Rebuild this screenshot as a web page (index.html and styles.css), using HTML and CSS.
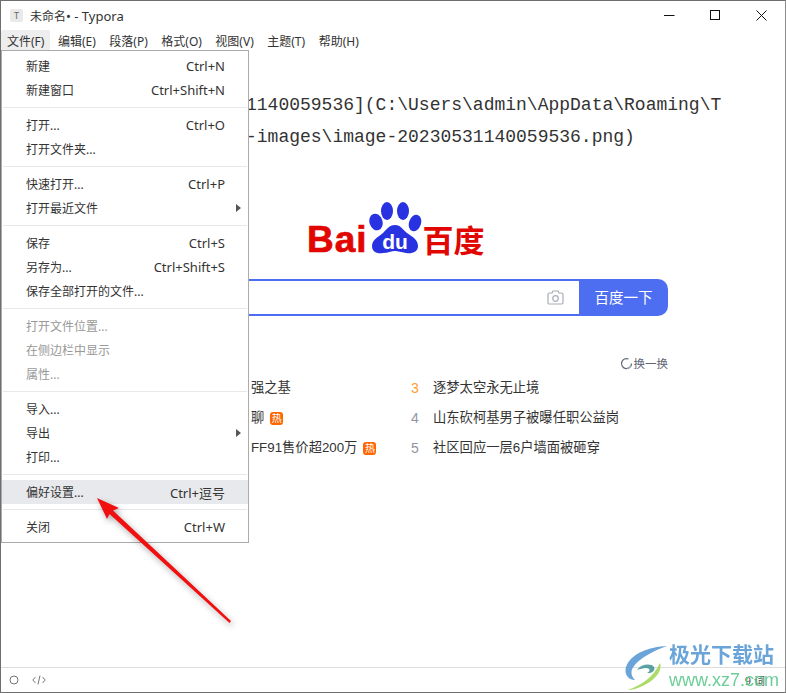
FILE: index.html
```html
<!DOCTYPE html>
<html lang="zh-CN">
<head>
    <meta charset="UTF-8">
    <meta name="viewport" content="width=device-width, initial-scale=1.0">
    <title>未命名• - Typora</title>
    <link rel="stylesheet" href="styles.css">
</head>
<body>
    <div class="window">
        <header class="titlebar">
            <div class="app-icon">T</div>
            <div class="app-title">未命名<span class="title-latin">• - Typora</span></div>
            <div class="win-buttons">
                <svg width="11" height="11" viewBox="0 0 11 11"><path d="M0 5.5H10.5" stroke="#111" fill="none"/></svg>
                <svg width="11" height="11" viewBox="0 0 11 11"><rect x="0.5" y="0.5" width="9" height="9" stroke="#111" fill="none"/></svg>
                <svg width="11" height="11" viewBox="0 0 11 11"><path d="M0.5 0.5L10.5 10.5M10.5 0.5L0.5 10.5" stroke="#111" fill="none"/></svg>
            </div>
        </header>

        <nav class="menubar">
            <a href="#" class="active">文件(F)</a>
            <a href="#">编辑(E)</a>
            <a href="#">段落(P)</a>
            <a href="#">格式(O)</a>
            <a href="#">视图(V)</a>
            <a href="#">主题(T)</a>
            <a href="#">帮助(H)</a>
        </nav>

        <main class="editor">
            <pre class="source">1140059536](C:\Users\admin\AppData\Roaming\T
-images\image-20230531140059536.png)</pre>

            <div class="baidu">
                <div class="baidu-logo">
                    <span class="logo-bai">Bai</span>
                    <svg class="logo-paw" width="55" height="58" viewBox="0 0 55 58">
                        <ellipse cx="8" cy="22" rx="6.5" ry="8.5" transform="rotate(-18 8 22)" fill="#2932e1"/>
                        <ellipse cx="19" cy="11" rx="6" ry="9" fill="#2932e1"/>
                        <ellipse cx="35" cy="11" rx="6" ry="9" fill="#2932e1"/>
                        <ellipse cx="47" cy="23" rx="6" ry="8.5" transform="rotate(18 47 23)" fill="#2932e1"/>
                        <path d="M27 25C33 25 35 30 39 33C45 37 50 40 50 46C50 52 44 54 38 53C33 52 30 51 27 51C23 51 20 53 15 53C9 54 4 52 4 46C4 40 10 37 15 33C18 30 21 25 27 25Z" fill="#2932e1"/>
                        <text x="27" y="49" text-anchor="middle" class="logo-du">du</text>
                    </svg>
                    <span class="logo-cn">百度</span>
                </div>

                <div class="search-box">
                    <div class="search-input">
                        <svg width="17" height="15" viewBox="0 0 17 15">
                            <path d="M2.5 3H5L6 1H11L12 3H14.5C15.4 3 16 3.6 16 4.5V12.5C16 13.4 15.4 14 14.5 14H2.5C1.6 14 1 13.4 1 12.5V4.5C1 3.6 1.6 3 2.5 3Z" fill="none" stroke="#a8acb8" stroke-width="1.2"/>
                            <circle cx="8.5" cy="8.5" r="2.8" fill="none" stroke="#a8acb8" stroke-width="1.2"/>
                        </svg>
                    </div>
                    <div class="search-btn">百度一下</div>
                </div>

                <div class="hot-head">
                    <svg width="13" height="13" viewBox="0 0 13 13">
                        <path d="M11.5 6.5A5 5 0 1 1 8.5 2" fill="none" stroke="#626675" stroke-width="1.2"/>
                        <path d="M7 11.5A5 5 0 0 0 11 9" fill="none" stroke="#a8acb8" stroke-width="1.2"/>
                    </svg>
                    <span>换一换</span>
                </div>

                <div class="hot-list">
                    <div class="hot-left">强之基</div>
                    <div class="hot-right"><span class="num num-3">3</span>逐梦太空永无止境</div>
                    <div class="hot-left">聊<span class="hot-tag">热</span></div>
                    <div class="hot-right"><span class="num">4</span>山东砍柯基男子被曝任职公益岗</div>
                    <div class="hot-left">FF91售价超200万<span class="hot-tag">热</span></div>
                    <div class="hot-right"><span class="num">5</span>社区回应一层6户墙面被砸穿</div>
                </div>
            </div>
        </main>

        <footer class="statusbar">
            <svg width="10" height="10" viewBox="0 0 10 10"><circle cx="5" cy="5" r="4" fill="none" stroke="#777"/></svg>
            <svg width="14" height="10" viewBox="0 0 14 10"><path d="M3.5 2L0.8 5L3.5 8M10.5 2L13.2 5L10.5 8M8 0.5L6 9.5" fill="none" stroke="#777"/></svg>
            <span class="word-count">9 词</span>
        </footer>

        <!-- 文件菜单 -->
        <div class="file-menu">
            <div class="item"><span>新建</span><span class="key">Ctrl+N</span></div>
            <div class="item"><span>新建窗口</span><span class="key">Ctrl+Shift+N</span></div>
            <div class="sep"></div>
            <div class="item"><span>打开...</span><span class="key">Ctrl+O</span></div>
            <div class="item"><span>打开文件夹...</span></div>
            <div class="sep"></div>
            <div class="item"><span>快速打开...</span><span class="key">Ctrl+P</span></div>
            <div class="item has-sub"><span>打开最近文件</span></div>
            <div class="sep"></div>
            <div class="item"><span>保存</span><span class="key">Ctrl+S</span></div>
            <div class="item"><span>另存为...</span><span class="key">Ctrl+Shift+S</span></div>
            <div class="item"><span>保存全部打开的文件...</span></div>
            <div class="sep"></div>
            <div class="item disabled"><span>打开文件位置...</span></div>
            <div class="item disabled"><span>在侧边栏中显示</span></div>
            <div class="item disabled"><span>属性...</span></div>
            <div class="sep"></div>
            <div class="item"><span>导入...</span></div>
            <div class="item has-sub"><span>导出</span></div>
            <div class="item"><span>打印...</span></div>
            <div class="sep"></div>
            <div class="item hover"><span>偏好设置...</span><span class="key">Ctrl+逗号</span></div>
            <div class="sep"></div>
            <div class="item"><span>关闭</span><span class="key">Ctrl+W</span></div>
        </div>

        <!-- 红色箭头标注 -->
        <svg class="annotation" width="160" height="140" viewBox="0 0 160 140">
            <path d="M5 8L27 18L21 20.5L139 131L137.5 133L17.5 24L15 29Z" fill="#f01010"/>
        </svg>

        <!-- 水印 -->
        <div class="watermark">
            <svg width="46" height="46" viewBox="0 0 46 46">
                <path d="M44 1C26 2 8 8 3 22C1 29 5 35 12 35C8 31 7 26 11 21C17 13 30 6 44 1Z" fill="#5b9bd5"/>
                <path d="M14 25C18 19 28 18 31 22C33 25 29 29 24 28C28 26 27 23 23 23C20 23 17 24 14 25Z" fill="#4a9a9a"/>
                <path d="M37 18C40 26 31 38 12 44C8 45 6 45 5 45C18 40 30 33 37 18Z" fill="#a5d85a"/>
            </svg>
            <div class="wm-text">
                <div class="wm-cn">极光下载站</div>
                <div class="wm-url">www.xz7.com</div>
            </div>
        </div>
    </div>
</body>
</html>
```

FILE: styles.css
```css
* {
    box-sizing: border-box;
}
body {
    margin: 0;
    background-color: #fff;
    font-family: "Noto Sans", "Noto Sans CJK SC", sans-serif;
    font-size: 12px;
    color: #333;
}
.window {
    position: relative;
    width: 786px;
    height: 693px;
    border: 1px solid #6f6f6f;
    border-right-color: #8a8a8a;
    display: flex;
    flex-direction: column;
    overflow: hidden;
    background-color: #fff;
}

/* 标题栏 */
.titlebar {
    height: 29px;
    flex: none;
    display: flex;
    align-items: center;
    padding-left: 9px;
}
.app-icon {
    width: 13px;
    height: 13px;
    background-color: #e9e9e9;
    border-radius: 2px;
    color: #666;
    font-size: 9px;
    line-height: 13px;
    text-align: center;
}
.app-title {
    margin-left: 7px;
    color: #333;
}
.title-latin {
    font-size: 13px;
}
.win-buttons {
    margin-left: auto;
    display: flex;
    gap: 35px;
    padding-right: 18px;
}

/* 菜单栏 */
.menubar {
    height: 20px;
    flex: none;
    display: flex;
}
.menubar a {
    padding: 0 6px;
    margin-right: 1.5px;
    line-height: 24px;
    color: #333;
    text-decoration: none;
    border-radius: 2px 2px 0 0;
}
.menubar a.active {
    background-color: #eeeeee;
}

/* 编辑区 */
.editor {
    flex: 1;
    min-height: 0;
    padding-top: 39px;
}
.source {
    margin: 0;
    padding-left: 245px;
    font-family: "Liberation Mono", monospace;
    font-size: 18px;
    line-height: 32px;
    color: #333;
    white-space: pre;
}
.baidu {
    margin: 47px 0 0 128px;
    width: 539px;
}
.baidu-logo {
    margin-left: 178px;
    height: 58px;
    display: flex;
    align-items: flex-end;
}
.logo-bai {
    font-family: "Liberation Sans", sans-serif;
    font-weight: bold;
    font-size: 37px;
    letter-spacing: 1px;
    line-height: 40px;
    color: #e10601;
    -webkit-text-stroke: 0.7px #e10601;
    margin-bottom: -2px;
}
.logo-du {
    font-family: "Liberation Sans", sans-serif;
    font-weight: bold;
    font-size: 21px;
    fill: #fff;
}
.logo-cn {
    font-family: "Noto Sans CJK SC", sans-serif;
    font-weight: 700;
    font-size: 31px;
    line-height: 40px;
    color: #e10601;
    margin-bottom: -1px;
}
.search-box {
    margin-top: 21px;
    height: 37px;
    display: flex;
}
.search-input {
    flex: 1;
    border: 2px solid #4e6ef2;
    border-right: none;
    border-radius: 10px 0 0 10px;
    background-color: #fff;
    display: flex;
    align-items: center;
    justify-content: flex-end;
    padding-right: 15px;
}
.search-btn {
    width: 89px;
    background-color: #4e6ef2;
    border-radius: 0 10px 10px 0;
    color: #fff;
    font-size: 14.5px;
    line-height: 36px;
    text-align: center;
}
.hot-head {
    margin-top: 39px;
    height: 16px;
    display: flex;
    justify-content: flex-end;
    align-items: center;
    gap: 1px;
    font-size: 11.5px;
    color: #626675;
}
.hot-list {
    margin-top: 2px;
    padding-left: 122px;
    display: grid;
    grid-template-columns: 160px 1fr;
    grid-auto-rows: 30px;
    font-family: "Liberation Sans", "Noto Sans CJK SC", sans-serif;
    font-size: 13.3px;
    line-height: 30px;
    color: #333;
}
.hot-left,
.hot-right {
    display: flex;
    align-items: center;
    white-space: nowrap;
}
.num {
    width: 22px;
    font-size: 14px;
    color: #9195a3;
}
.num-3 {
    color: #ff9f2e;
}
.hot-tag {
    margin-left: 6px;
    width: 13px;
    height: 13px;
    border-radius: 3px;
    background-color: #ff6600;
    color: #fff;
    font-size: 10px;
    line-height: 13px;
    text-align: center;
}

/* 状态栏 */
.statusbar {
    height: 25px;
    flex: none;
    border-top: 1px solid #dddddd;
    display: flex;
    align-items: center;
    gap: 13px;
    padding-left: 8px;
    color: #555;
}
.word-count {
    margin-left: auto;
    margin-right: 20px;
    font-size: 11px;
}

/* 文件菜单 */
.file-menu {
    position: absolute;
    left: 0;
    top: 49px;
    width: 248px;
    padding: 3px 0 3px;
    background-color: #fff;
    border: 1px solid #ababab;
}
.item {
    height: 24px;
    padding: 0 23px 0 24px;
    display: flex;
    justify-content: space-between;
    align-items: center;
    position: relative;
    color: #333;
}
.key {
    font-size: 13px;
}
.item.disabled {
    color: #999;
}
.item.hover {
    background-color: #e8e9ec;
}
.has-sub::after {
    content: "";
    position: absolute;
    right: 7px;
    top: 8px;
    border-left: 5px solid #555;
    border-top: 4px solid transparent;
    border-bottom: 4px solid transparent;
}
.sep {
    height: 1px;
    margin: 5px 1px;
    background-color: #e8e8e8;
}

/* 标注 */
.annotation {
    position: absolute;
    left: 91px;
    top: 489px;
    filter: drop-shadow(2px 3px 3px rgba(0, 0, 0, 0.35));
}

/* 水印 */
.watermark {
    position: absolute;
    right: 6px;
    bottom: 1px;
    display: flex;
    align-items: flex-end;
    opacity: 0.9;
}
.wm-cn {
    font-family: "Noto Sans CJK SC", sans-serif;
    font-weight: 700;
    font-size: 21px;
    line-height: 25px;
    color: #5b9bd5;
    margin-bottom: 3px;
}
.wm-url {
    font-family: "Liberation Sans", sans-serif;
    font-size: 18px;
    line-height: 22px;
    color: #5cc98c;
}
```
